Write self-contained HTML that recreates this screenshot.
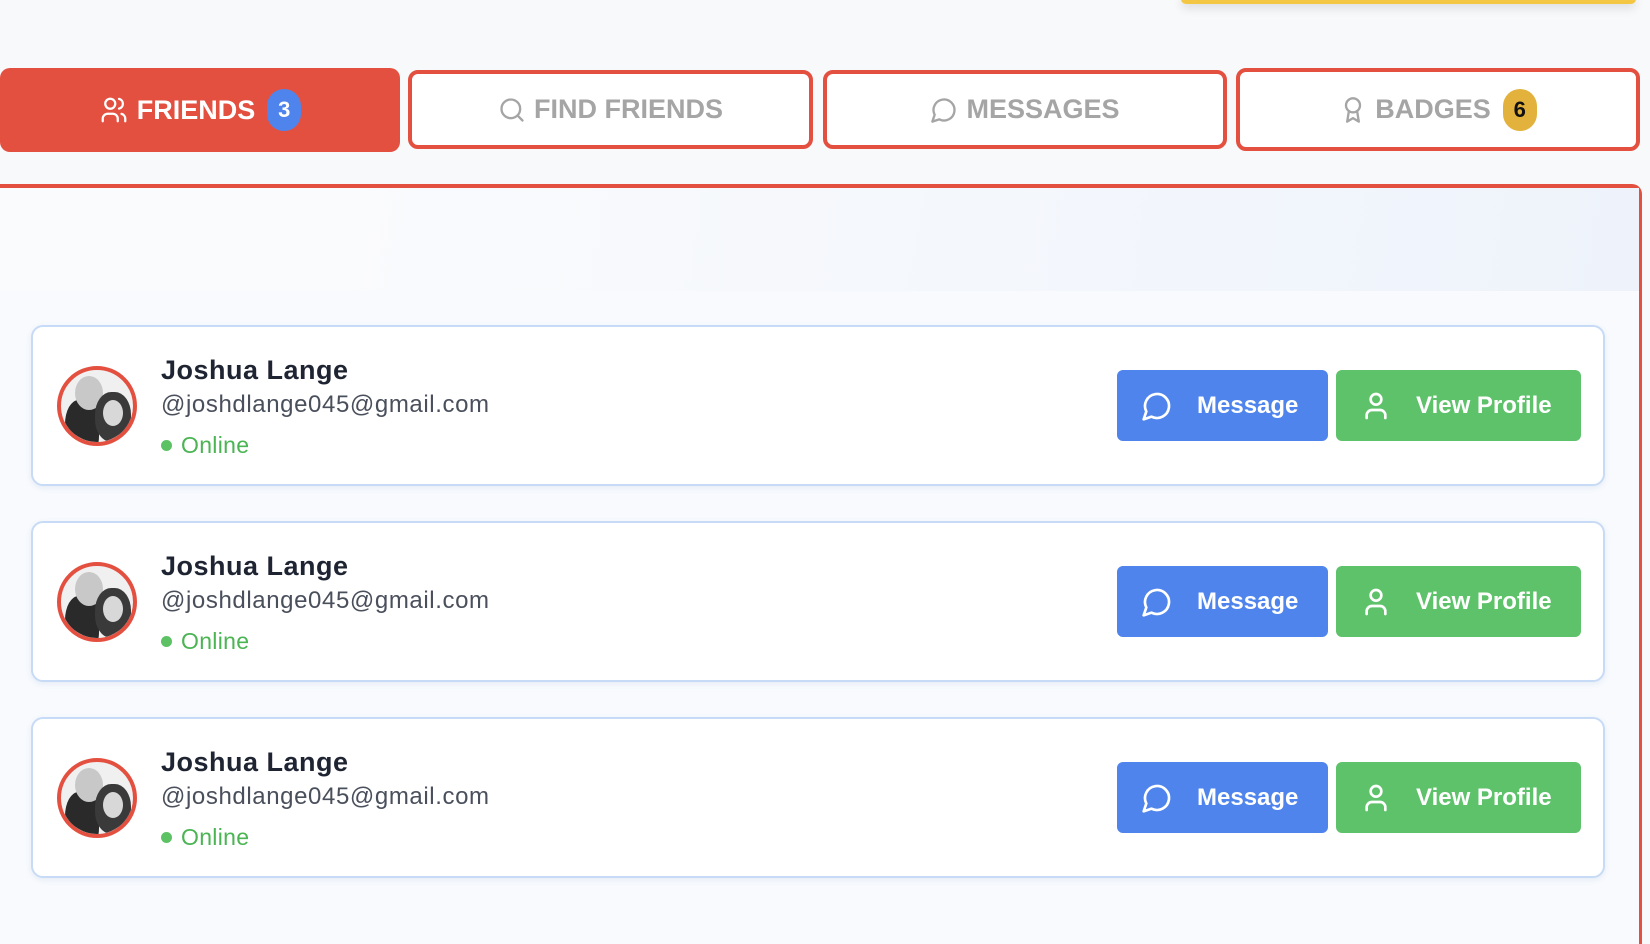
<!DOCTYPE html>
<html><head><meta charset="utf-8"><style>
*{box-sizing:border-box;margin:0;padding:0}
body{width:1650px;height:896px;overflow:hidden;background:#f8f9fb;font-family:"Liberation Sans",sans-serif;position:relative}
.ybar{position:absolute;left:1181px;top:-6px;width:455px;height:10px;background:#f3c744;border-radius:6px;box-shadow:0 4px 10px rgba(0,0,0,.12)}
.tab{position:absolute;display:flex;align-items:center;justify-content:center;gap:8px;font-weight:700;font-size:27px;border:4px solid #e45040;border-radius:10px;background:#fff;color:#a5a5a5}
.tab.act{background:#e45040;color:#fff;border:none}
.badge{display:inline-flex;align-items:center;justify-content:center;width:34px;height:42px;border-radius:17px;font-size:22px;font-weight:700;margin-left:4px}
.panel{position:absolute;left:0;top:184px;width:1642px;height:760px;border-top:4px solid #e45040;border-right:3px solid #e45040;border-top-right-radius:10px;background:#f8fafd}
.phead{position:absolute;left:0;top:0;width:100%;height:103px;background:linear-gradient(100deg,#fafbfd 20%,#eef3fb)}
.card{position:absolute;left:31px;width:1574px;height:161px;background:#fff;border:2px solid #c7dbf6;border-radius:12px;box-shadow:0 2px 6px rgba(100,140,200,.12)}
.av{position:absolute;left:24px;top:39px;width:80px;height:80px;border-radius:50%;border:4px solid #e45040;background:#f0f0f0;overflow:hidden}
.av i{position:absolute;display:block;border-radius:50%}
.name{position:absolute;left:128px;top:28px;font-size:27px;font-weight:700;color:#1f2433;letter-spacing:.5px}
.mail{position:absolute;left:128px;top:64px;font-size:24px;color:#4a4f5c;letter-spacing:.6px}
.on{position:absolute;left:128px;top:105px;font-size:23px;color:#4bb453;display:flex;align-items:center;gap:9px;letter-spacing:.3px}
.on i{width:11px;height:11px;border-radius:50%;background:#5cc264;display:block}
.btn{position:absolute;top:43px;height:71px;border-radius:6px;color:#fff;font-weight:700;font-size:24px;display:flex;align-items:center}
.b1{left:1084px;width:211px;background:#4f84ec}
.b2{left:1303px;width:245px;background:#5ec26a}
.btn svg{position:absolute;left:24px}
.btn span{position:absolute;left:80px}
</style></head><body>
<div class="ybar"></div>
<div class="tab act" style="left:0;top:68px;width:400px;height:84px">
<svg width="30" height="30" viewBox="0 0 24 24" fill="none" stroke="#fff" stroke-width="1.8" stroke-linecap="round"><circle cx="9" cy="7" r="4"/><path d="M3 21v-2a4 4 0 0 1 4-4h4a4 4 0 0 1 4 4v2"/><path d="M16 3.1a4 4 0 0 1 0 7.8M21 21v-2a4 4 0 0 0-3-3.9"/></svg>
FRIENDS<span class="badge" style="background:#4f84ec;color:#fff">3</span></div>
<div class="tab" style="left:408px;top:70px;width:405px;height:79px">
<svg width="28" height="28" viewBox="0 0 24 24" fill="none" stroke="#a5a5a5" stroke-width="2" stroke-linecap="round"><circle cx="11" cy="11" r="8"/><path d="M21 21l-4.3-4.3"/></svg>FIND FRIENDS</div>
<div class="tab" style="left:823px;top:70px;width:404px;height:79px">
<svg width="28" height="28" viewBox="0 0 24 24" fill="none" stroke="#a5a5a5" stroke-width="2" stroke-linecap="round" stroke-linejoin="round"><path d="M7.9 20A9 9 0 1 0 4 16.1L2 22z"/></svg>MESSAGES</div>
<div class="tab" style="left:1236px;top:68px;width:404px;height:83px">
<svg width="28" height="30" viewBox="0 0 24 24" fill="none" stroke="#a5a5a5" stroke-width="2" stroke-linecap="round" stroke-linejoin="round"><circle cx="12" cy="8" r="6"/><path d="M15.5 12.9L17 22l-5-3-5 3 1.5-9.1"/></svg>BADGES<span class="badge" style="background:#e2b23c;color:#111">6</span></div>
<div class="panel"><div class="phead"></div></div>

<div class="card" style="top:325px"><div class="av"><i style="left:4px;top:30px;width:34px;height:60px;background:#2a2a2a;border-radius:40%"></i><i style="left:14px;top:6px;width:28px;height:34px;background:#c8c8c8"></i><i style="left:34px;top:22px;width:36px;height:50px;background:#3a3a3a;border-radius:45%"></i><i style="left:42px;top:30px;width:20px;height:26px;background:#d8d8d8"></i></div><div class="name">Joshua Lange</div><div class="mail">@joshdlange045@gmail.com</div><div class="on"><i></i>Online</div>
<div class="btn b1"><svg width="32" height="32" viewBox="0 0 24 24" fill="none" stroke="#fff" stroke-width="2" stroke-linejoin="round"><path d="M7.9 20A9 9 0 1 0 4 16.1L2 22z"/></svg><span>Message</span></div>
<div class="btn b2"><svg width="32" height="32" viewBox="0 0 24 24" fill="none" stroke="#fff" stroke-width="2" stroke-linecap="round"><circle cx="12" cy="7" r="4"/><path d="M5 21v-2a4 4 0 0 1 4-4h6a4 4 0 0 1 4 4v2"/></svg><span>View Profile</span></div></div>

<div class="card" style="top:521px"><div class="av"><i style="left:4px;top:30px;width:34px;height:60px;background:#2a2a2a;border-radius:40%"></i><i style="left:14px;top:6px;width:28px;height:34px;background:#c8c8c8"></i><i style="left:34px;top:22px;width:36px;height:50px;background:#3a3a3a;border-radius:45%"></i><i style="left:42px;top:30px;width:20px;height:26px;background:#d8d8d8"></i></div><div class="name">Joshua Lange</div><div class="mail">@joshdlange045@gmail.com</div><div class="on"><i></i>Online</div>
<div class="btn b1"><svg width="32" height="32" viewBox="0 0 24 24" fill="none" stroke="#fff" stroke-width="2" stroke-linejoin="round"><path d="M7.9 20A9 9 0 1 0 4 16.1L2 22z"/></svg><span>Message</span></div>
<div class="btn b2"><svg width="32" height="32" viewBox="0 0 24 24" fill="none" stroke="#fff" stroke-width="2" stroke-linecap="round"><circle cx="12" cy="7" r="4"/><path d="M5 21v-2a4 4 0 0 1 4-4h6a4 4 0 0 1 4 4v2"/></svg><span>View Profile</span></div></div>

<div class="card" style="top:717px"><div class="av"><i style="left:4px;top:30px;width:34px;height:60px;background:#2a2a2a;border-radius:40%"></i><i style="left:14px;top:6px;width:28px;height:34px;background:#c8c8c8"></i><i style="left:34px;top:22px;width:36px;height:50px;background:#3a3a3a;border-radius:45%"></i><i style="left:42px;top:30px;width:20px;height:26px;background:#d8d8d8"></i></div><div class="name">Joshua Lange</div><div class="mail">@joshdlange045@gmail.com</div><div class="on"><i></i>Online</div>
<div class="btn b1"><svg width="32" height="32" viewBox="0 0 24 24" fill="none" stroke="#fff" stroke-width="2" stroke-linejoin="round"><path d="M7.9 20A9 9 0 1 0 4 16.1L2 22z"/></svg><span>Message</span></div>
<div class="btn b2"><svg width="32" height="32" viewBox="0 0 24 24" fill="none" stroke="#fff" stroke-width="2" stroke-linecap="round"><circle cx="12" cy="7" r="4"/><path d="M5 21v-2a4 4 0 0 1 4-4h6a4 4 0 0 1 4 4v2"/></svg><span>View Profile</span></div></div>
</body></html>
